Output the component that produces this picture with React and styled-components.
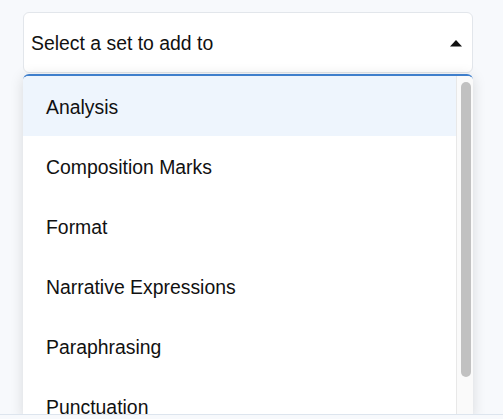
import React from 'react';
import styled, { createGlobalStyle } from 'styled-components';

const GlobalStyle = createGlobalStyle`
  html, body {
    margin: 0;
    padding: 0;
    background: #f7f9fc;
    font-family: "Liberation Sans", Arial, Helvetica, sans-serif;
  }
`;

const Page = styled.div`
  height: 415px;
  overflow: hidden;
  border-bottom: 1px solid #dde5ee;
  padding: 12px 30px 0 23px;
  box-sizing: border-box;
`;

const SelectBox = styled.div`
  height: 61px;
  box-sizing: border-box;
  background: #fff;
  border: 1px solid #e2e6eb;
  border-radius: 6px;
  display: flex;
  align-items: center;
  justify-content: space-between;
  padding: 1px 9px 0 7px;
  font-size: 19.4px;
  color: #111;
`;

const Menu = styled.div`
  margin-top: 1px;
  height: 341px;
  background: #fff;
  border-top: 2px solid #3f7fcc;
  border-radius: 6px 6px 0 0;
  box-shadow: 0 2px 14px rgba(0, 0, 0, 0.13);
  display: flex;
  overflow: hidden;
`;

const List = styled.div`
  flex: 1;
  display: flex;
  flex-direction: column;
`;

const Item = styled.div`
  height: 60px;
  box-sizing: border-box;
  flex-shrink: 0;
  display: flex;
  align-items: center;
  padding: 3px 0 0 23px;
  font-size: 19.4px;
  color: #111;
  background: ${p => (p.active ? '#eef5fd' : '#fff')};
`;

const Track = styled.div`
  width: 17px;
  background: #fafafa;
  border-left: 1px solid #e8e8e8;
  box-sizing: border-box;
  padding: 6px 2px 0 4px;
`;

const Thumb = styled.div`
  height: 295px;
  background: #c1c1c1;
  border-radius: 6px;
`;

const Caret = () => (
  <svg width="14" height="8" viewBox="0 0 14 8">
    <path d="M1 7.5 L7 1 L13 7.5 Z" fill="#111" />
  </svg>
);

const options = [
  'Analysis',
  'Composition Marks',
  'Format',
  'Narrative Expressions',
  'Paraphrasing',
  'Punctuation',
];

export default function App() {
  return (
    <>
      <GlobalStyle />
      <Page>
        <SelectBox>
          <span>Select a set to add to</span>
          <Caret />
        </SelectBox>
        <Menu>
          <List>
            {options.map((o, i) => (
              <Item key={o} active={i === 0}>{o}</Item>
            ))}
          </List>
          <Track>
            <Thumb />
          </Track>
        </Menu>
      </Page>
    </>
  );
}
